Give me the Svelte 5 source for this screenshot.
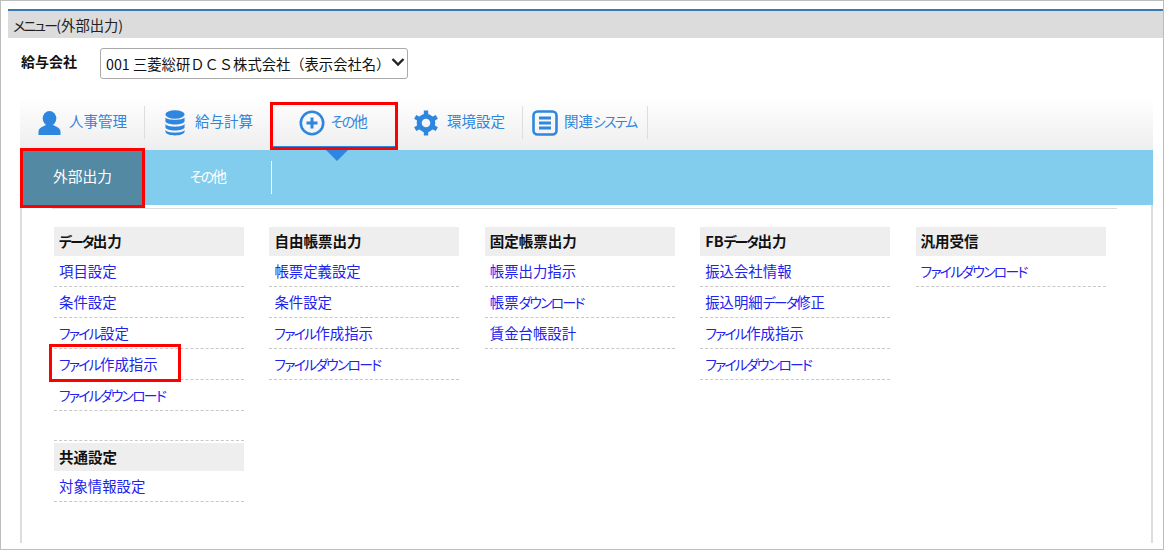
<script>
	let columns = [
		{
			groups: [
				{ title: 'データ出力', items: ['項目設定', '条件設定', 'ファイル設定', 'ファイル作成指示', 'ファイルダウンロード'] },
				{ title: '共通設定', items: ['対象情報設定'] }
			]
		},
		{ groups: [{ title: '自由帳票出力', items: ['帳票定義設定', '条件設定', 'ファイル作成指示', 'ファイルダウンロード'] }] },
		{ groups: [{ title: '固定帳票出力', items: ['帳票出力指示', '帳票ダウンロード', '賃金台帳設計'] }] },
		{ groups: [{ title: 'FBデータ出力', items: ['振込会社情報', '振込明細データ修正', 'ファイル作成指示', 'ファイルダウンロード'] }] },
		{ groups: [{ title: '汎用受信', items: ['ファイルダウンロード'] }] }
	];

	// kana sets narrower than kanji in the original UI font
	const runs = (text) => text.match(/[\u3040-\u30ff]+|[^\u3040-\u30ff]+/g);
	const isKana = (run) => /^[\u3040-\u30ff]/.test(run);
</script>

{#snippet label(text)}
	{#each runs(text) as run}{#if isKana(run)}<span class="kana">{run}</span>{:else}{run}{/if}{/each}
{/snippet}

<div class="frame">
	<div class="page">
		<div class="title">{@render label('メニュー(外部出力)')}</div>

		<div class="company">
			<b>給与会社</b>
			<div class="select">
				<span>001 三菱総研ＤＣＳ株式会社（表示会社名）</span>
				<svg class="chevron" width="14" height="10" viewBox="0 0 14 10"><path d="M1.5 2 L7 7.5 L12.5 2" fill="none" stroke="#222" stroke-width="2.4" /></svg>
			</div>
		</div>

		<div class="menu">
			<nav class="tabs">
				<div class="tab tab-person">
					<svg width="23" height="24" viewBox="0 0 23 24" fill="#2e86de">
						<ellipse cx="11.5" cy="7.5" rx="6.8" ry="7.5" />
						<path d="M.5 24 V20.5 C.5 17 5 15.5 8 14 H15 C18 15.5 22.5 17 22.5 20.5 V24 Z" />
					</svg>
					<span>人事管理</span>
				</div>
				<div class="tab tab-db">
					<svg width="20" height="26" viewBox="0 0 22 26" preserveAspectRatio="none" fill="#2e86de">
						<ellipse cx="11" cy="4.5" rx="10.5" ry="4.2" />
						<path d="M.5 7.5 C2 10.5 20 10.5 21.5 7.5 V11.5 C20 15.5 2 15.5 .5 11.5 Z" />
						<path d="M.5 14 C2 17.5 20 17.5 21.5 14 V17.5 C20 21.5 2 21.5 .5 17.5 Z" />
						<path d="M.5 20 C2 23.5 20 23.5 21.5 20 V22 C20 26.5 2 26.5 .5 22 Z" />
					</svg>
					<span>給与計算</span>
				</div>
				<div class="tab tab-other active">
					<svg width="26" height="26" viewBox="0 0 26 26">
						<circle cx="13" cy="13" r="11.2" fill="none" stroke="#2e86de" stroke-width="2.6" />
						<path d="M13 7.5 V18.5 M7.5 13 H18.5" stroke="#2e86de" stroke-width="3" />
					</svg>
					<span>{@render label('その他')}</span>
				</div>
				<div class="tab tab-gear">
					<svg width="26" height="26" viewBox="0 0 26 26">
						<circle cx="13" cy="13" r="6.8" fill="none" stroke="#2e86de" stroke-width="5" />
						<g stroke="#2e86de" stroke-width="4.4">
							<path d="M13 .5 V5" /><path d="M13 21 V25.5" />
							<path d="M2.2 6.8 L6 9" /><path d="M20 17 L23.8 19.2" />
							<path d="M2.2 19.2 L6 17" /><path d="M20 9 L23.8 6.8" />
						</g>
					</svg>
					<span>環境設定</span>
				</div>
				<div class="tab tab-sys">
					<svg width="26" height="26" viewBox="0 0 26 26">
						<rect x="1.5" y="1.5" width="23" height="23" rx="4" fill="none" stroke="#2e86de" stroke-width="2.6" />
						<path d="M7 8 H19 M7 13 H19 M7 18 H19" stroke="#2e86de" stroke-width="3" />
					</svg>
					<span>{@render label('関連システム')}</span>
				</div>
			</nav>

			<div class="subnav">
				<div class="sub current">外部出力</div>
				<div class="sub">{@render label('その他')}</div>
			</div>

			<div class="panel">
				<div class="columns">
					{#each columns as col}
						<div class="col">
							{#each col.groups as group}
								<section>
									<h3>{@render label(group.title)}</h3>
									<ul>
										{#each group.items as item}
											<li><a href="#top">{@render label(item)}</a></li>
										{/each}
									</ul>
								</section>
							{/each}
						</div>
					{/each}
				</div>
			</div>

			<!-- red annotation boxes drawn over the screenshot -->
			<div class="mark mark-tab"></div>
			<div class="mark mark-sub"></div>
			<div class="mark mark-link"></div>
		</div>
	</div>
</div>

<style>
	:global(*) {
		box-sizing: border-box;
	}

	:global(body) {
		margin: 0;
		background: #fff;
		font-family: 'Noto Sans CJK JP', 'Liberation Sans', sans-serif;
		font-feature-settings: 'palt';
	}

	.kana {
		font-size: 13.8px;
		letter-spacing: -1.7px;
	}

	.frame {
		width: 1164px;
		height: 550px;
		border: 1px solid #bdbdbd;
		padding: 8px 0 0 7px;
		overflow: hidden;
	}

	.title {
		height: 29px;
		background: #dcdcdc;
		border-top: 2px solid #3a78b5;
		padding: 4px 0 0 5px;
		font-size: 14.3px;
		line-height: 20px;
		color: #222;
	}

	.company {
		display: flex;
		align-items: center;
		height: 50px;
		padding: 0 0 0 13px;
		font-size: 14px;
		color: #111;
	}

	.company b {
		width: 79px;
		padding-bottom: 4px;
	}

	.select {
		width: 308px;
		height: 31px;
		border: 1px solid #aaa;
		border-radius: 3px;
		display: flex;
		align-items: center;
		justify-content: space-between;
		padding: 0 2px 0 5px;
		font-size: 14.3px;
		font-feature-settings: normal;
		color: #111;
		white-space: nowrap;
	}

	.chevron {
		margin-bottom: 2px;
	}

	.menu {
		position: relative;
		margin: 0 10px 0 12px;
	}

	.tabs {
		height: 62px;
		display: flex;
		background: linear-gradient(#fff 14%, #eee);
		padding-top: 18px;
	}

	.tab {
		display: flex;
		align-items: center;
		gap: 8px;
		height: 33px;
		color: #2e86de;
		font-size: 14.5px;
		border-right: 1px solid #ddd;
		white-space: nowrap;
		padding-bottom: 4px;
	}

	.tab svg {
		flex: none;
		margin-bottom: -5px;
	}

	.tab-person {
		flex: 0 0 125px;
		padding-left: 18px;
	}

	.tab-db {
		flex: 0 0 126px;
		padding-left: 20px;
		border-right: none;
		gap: 10px;
	}

	.tab-other {
		flex: 0 0 127px;
		padding-left: 28px;
		border-right: none;
		gap: 6px;
		position: relative;
	}

	.tab-other::after {
		content: '';
		position: absolute;
		left: 2px;
		right: 2px;
		top: 40px;
		height: 1px;
		background: #2e86de;
	}

	.tab-gear {
		flex: 0 0 125px;
		padding-left: 15px;
	}

	.tab-sys {
		flex: 0 0 125px;
		padding-left: 9px;
		gap: 6px;
	}

	.subnav {
		position: relative;
		height: 55px;
		background: #82cdee;
		display: flex;
	}

	.subnav::before {
		content: '';
		position: absolute;
		left: 306px;
		top: 0;
		border: 11px solid transparent;
		border-top-color: #2e86de;
		border-bottom-width: 0;
	}

	.sub {
		flex: 0 0 125px;
		display: flex;
		align-items: center;
		justify-content: center;
		color: #fff;
		font-size: 14.7px;
		padding-bottom: 4px;
	}

	.sub + .sub {
		flex-basis: 127px;
		position: relative;
	}

	.sub + .sub::after {
		content: '';
		position: absolute;
		right: 0;
		top: 11px;
		height: 33px;
		border-right: 1px solid #fff;
	}

	.current {
		background: #5489a3;
	}

	.panel {
		border-left: 2px solid #ddd;
		border-right: 2px solid #ddd;
		height: 338px;
		padding: 22px 0 0 32px;
		position: relative;
	}

	.panel::before {
		content: '';
		position: absolute;
		left: 30px;
		top: 3px;
		width: 1065px;
		border-top: 1px solid #ddd;
	}

	.columns {
		display: flex;
		gap: 25.4px;
	}

	.col {
		flex: 0 0 190px;
	}

	section + section {
		margin-top: 29px;
		border-top: 1px dashed #c8c8c8;
		padding-top: 2px;
	}

	section + section h3 {
		height: 28px;
	}

	h3 {
		margin: 0;
		height: 29px;
		background: #eee;
		padding-left: 5px;
		font-size: 14.5px;
		line-height: 27px;
		font-weight: 700;
		color: #111;
	}

	ul {
		margin: 0;
		padding: 0;
		list-style: none;
	}

	li {
		height: 31px;
		padding: 1px 0 0 5px;
		border-bottom: 1px dashed #c8c8c8;
		font-size: 14.4px;
		line-height: 28px;
		white-space: nowrap;
	}

	a {
		color: #2222ee;
		text-decoration: none;
	}

	.mark {
		position: absolute;
		border: 3px solid #f00;
		pointer-events: none;
	}

	.mark-tab {
		left: 250px;
		top: 14px;
		width: 128px;
		height: 48px;
	}

	.mark-sub {
		left: 0;
		top: 60px;
		width: 125px;
		height: 60px;
	}

	.mark-link {
		left: 29px;
		top: 256px;
		width: 132px;
		height: 38px;
	}
</style>
